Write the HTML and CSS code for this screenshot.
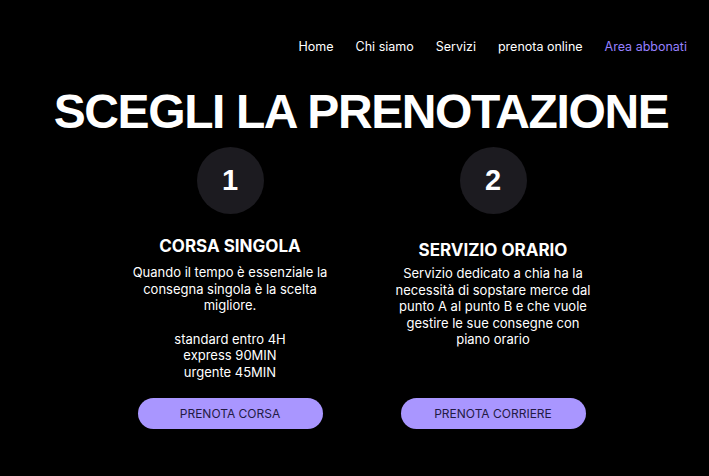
FILE: index.html
```html
<!DOCTYPE html>
<html lang="it">
<head>
  <meta charset="UTF-8">
  <meta name="viewport" content="width=device-width, initial-scale=1.0">
  <title>Scegli la prenotazione</title>
  <link rel="stylesheet" href="styles.css">
</head>
<body>
  <nav class="menu">
    <a href="#">Home</a>
    <a href="#">Chi siamo</a>
    <a href="#">Servizi</a>
    <a href="#">prenota online</a>
    <a href="#" class="menu-accent">Area abbonati</a>
  </nav>

  <h1 class="title">SCEGLI LA PRENOTAZIONE</h1>

  <div class="choices">
    <div class="choice">
      <div class="step">1</div>
      <h2>CORSA SINGOLA</h2>
      <p>Quando il tempo è essenziale la consegna singola è la scelta migliore.</p>
      <p>standard entro 4H<br>express 90MIN<br>urgente 45MIN</p>
      <a href="#" class="book-btn">PRENOTA CORSA</a>
    </div>
    <div class="choice">
      <div class="step">2</div>
      <h2 class="lower">SERVIZIO ORARIO</h2>
      <p>Servizio dedicato a chia ha la necessità di sopstare merce dal punto A al punto B e che vuole gestire le sue consegne con piano orario</p>
      <a href="#" class="book-btn">PRENOTA CORRIERE</a>
    </div>
  </div>
</body>
</html>
```

FILE: styles.css
```css
body {
  margin: 0;
  background-color: #000;
  color: #fff;
  font-family: Inter, "Liberation Sans", sans-serif;
}

a {
  color: inherit;
  text-decoration: none;
}

.menu {
  display: flex;
  justify-content: flex-end;
  gap: 22px;
  padding: 38px 22px 0 0;
  font-size: 12.5px;
  line-height: 18px;
}

.menu-accent {
  color: #9680ff;
}

.title {
  margin: 28px 0 0;
  padding-left: 13px;
  text-align: center;
  font-family: "Liberation Sans", Arial, sans-serif;
  font-size: 48px;
  font-weight: 700;
  line-height: 56px;
  letter-spacing: -1.4px;
}

.choices {
  display: grid;
  grid-template-columns: 263px 263px;
  justify-content: center;
  padding-left: 14px;
  margin-top: 7px;
}

.choice {
  display: flex;
  flex-direction: column;
  align-items: center;
  text-align: center;
}

.step {
  width: 67px;
  height: 67px;
  border-radius: 50%;
  background-color: #1c1b20;
  display: flex;
  justify-content: center;
  align-items: center;
  font-family: "Liberation Sans", Arial, sans-serif;
  font-size: 29px;
  font-weight: 700;
}

.choice h2 {
  margin: 21px 0 7px;
  font-size: 17px;
  font-weight: 700;
  line-height: 22px;
}

.choice h2.lower {
  margin: 25px 0 4px;
}

.choice p {
  max-width: 202px;
  margin: 0 0 17px;
  font-size: 13px;
  line-height: 16.6px;
}

.book-btn {
  margin-top: auto;
  width: 185px;
  height: 31px;
  border-radius: 16px;
  background-color: #a996ff;
  color: #231a44;
  font-size: 12px;
  line-height: 31px;
}
```
